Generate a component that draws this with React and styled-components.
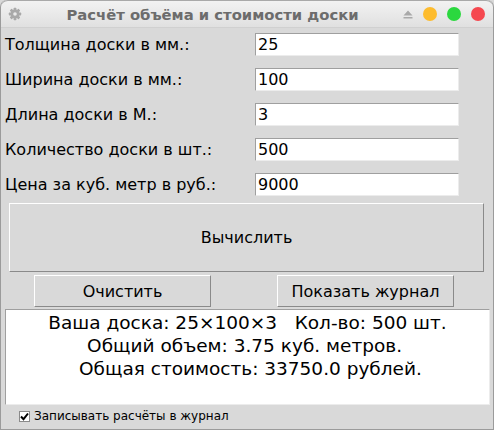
import React, { useState } from 'react'
import styled, { createGlobalStyle } from 'styled-components'

const Global = createGlobalStyle`
    html, body { margin: 0; padding: 0; background: #d9d9d9; }
    * { box-sizing: border-box; }
`

const Window = styled.div`
    width: 494px;
    height: 430px;
    display: flex;
    flex-direction: column;
    background: #d9d9d9;
    border: 1px solid #9b9b9b;
    border-top: none;
    border-radius: 7px 7px 0 0;
    overflow: hidden;
    font-family: "DejaVu Sans", sans-serif;
    color: #000;
`

const TitleBar = styled.div`
    height: 28px;
    flex: none;
    display: flex;
    align-items: center;
    padding: 0 8px 0 7px;
    background: linear-gradient(#f2f2f2, #e0e0e0);
    border-top: 1px solid #a9a9a9;
    border-bottom: 1px solid #d0d0d0;
    border-radius: 7px 7px 0 0;
`

const Title = styled.div`
    flex: 1;
    text-align: center;
    font-size: 14.8px;
    font-weight: bold;
    color: #6c6c6c;
    white-space: nowrap;
`

const Controls = styled.div`
    display: flex;
    align-items: center;
    gap: 10px;
`

const Dot = styled.span`
    width: 14px;
    height: 14px;
    border-radius: 50%;
    background: ${p => p.$c};
`

const Body = styled.div`
    flex: 1;
    display: flex;
    flex-direction: column;
    padding: 5px 4px 0 3px;
`

const Form = styled.div`
    display: grid;
    grid-template-columns: 250px 204px;
    row-gap: 12px;
    padding-left: 1px;
`

const Label = styled.label`
    font-size: 16px;
    line-height: 23px;
`

const Entry = styled.input`
    height: 23px;
    width: 204px;
    border: 1px solid;
    border-color: #9f9f9f #ececec #ececec #9f9f9f;
    background: #fff;
    font-family: "DejaVu Sans", sans-serif;
    font-size: 16px;
    padding: 0 0 0 2px;
    outline: none;
`

const Button = styled.button`
    background: #d9d9d9;
    border: 1px solid;
    border-color: #ffffff #8a8a8a #8a8a8a #ffffff;
    font-family: "DejaVu Sans", sans-serif;
    font-size: 16px;
    color: #000;
    padding: 0;
    cursor: pointer;
`

const BigButton = styled(Button)`
    height: 69px;
    margin: 7px 5px 0 5px;
`

const ButtonRow = styled.div`
    display: flex;
    justify-content: space-between;
    padding: 0 35px 0 30px;
    margin-top: 3px;
`

const SmallButton = styled(Button)`
    width: 177px;
    height: 32px;
`

const Output = styled.div`
    margin: 2px 0 0 1px;
    height: 96px;
    width: 485px;
    background: #fff;
    border: 1px solid;
    border-color: #9f9f9f #ececec #ececec #9f9f9f;
    font-size: 18.5px;
    line-height: 23px;
    text-align: center;
    padding-top: 1px;
    white-space: pre;
`

const CheckRow = styled.label`
    display: flex;
    align-items: center;
    gap: 4px;
    padding: 4px 0 0 15px;
    font-size: 12px;
`

const Box = styled.span`
    width: 11px;
    height: 11px;
    background: #fff;
    border: 1px solid #8a8a8a;
    display: flex;
    align-items: center;
    justify-content: center;
`

const Gear = () => (
    <svg width="14" height="14" viewBox="0 0 14 14">
        <g fill="#a9a9a9">
            {[0, 45, 90, 135].map(a => (
                <rect key={a} x="5.6" y="0.8" width="2.8" height="12.4" rx="0.6" transform={`rotate(${a} 7 7)`} />
            ))}
            <circle cx="7" cy="7" r="4.4" />
        </g>
        <circle cx="7" cy="7" r="1.8" fill="#eaeaea" />
    </svg>
)

const fields = [
    ['Толщина доски в мм.:', '25'],
    ['Ширина доски в мм.:', '100'],
    ['Длина доски в М.:', '3'],
    ['Количество доски в шт.:', '500'],
    ['Цена за куб. метр в руб.:', '9000'],
]

export default function App() {
    const [values, setValues] = useState(fields.map(f => f[1]))
    const [log, setLog] = useState(true)

    const onChange = (i, v) => {
        const next = [...values]
        next[i] = v
        setValues(next)
    }

    return (
        <>
            <Global />
            <Window>
                <TitleBar>
                    <Gear />
                    <Title>Расчёт объёма и стоимости доски</Title>
                    <Controls>
                        <svg width="10" height="9" viewBox="0 0 10 9">
                            <path d="M5 0.5 L9.5 5.5 H0.5 Z M0.5 7 H9.5 V8.6 H0.5 Z" fill="#a9a9a9" />
                        </svg>
                        <Dot $c="#fdbc2e" />
                        <Dot $c="#2bd83f" />
                        <Dot $c="#f5484f" />
                    </Controls>
                </TitleBar>
                <Body>
                    <Form>
                        {fields.map((f, i) => (
                            <React.Fragment key={f[0]}>
                                <Label>{f[0]}</Label>
                                <Entry value={values[i]} onChange={e => onChange(i, e.target.value)} />
                            </React.Fragment>
                        ))}
                    </Form>
                    <BigButton>Вычислить</BigButton>
                    <ButtonRow>
                        <SmallButton>Очистить</SmallButton>
                        <SmallButton>Показать журнал</SmallButton>
                    </ButtonRow>
                    <Output>
                        {'Ваша доска: 25×100×3   Кол-во: 500 шт.\nОбщий объем: 3.75 куб. метров. \n Общая стоимость: 33750.0 рублей.'}
                    </Output>
                    <CheckRow onClick={() => setLog(!log)}>
                        <Box>
                            {log && (
                                <svg width="9" height="9" viewBox="0 0 9 9">
                                    <path d="M1 4.5 L3.5 7.2 L8 1.5" stroke="#000" strokeWidth="2" fill="none" />
                                </svg>
                            )}
                        </Box>
                        Записывать расчёты в журнал
                    </CheckRow>
                </Body>
            </Window>
        </>
    )
}
